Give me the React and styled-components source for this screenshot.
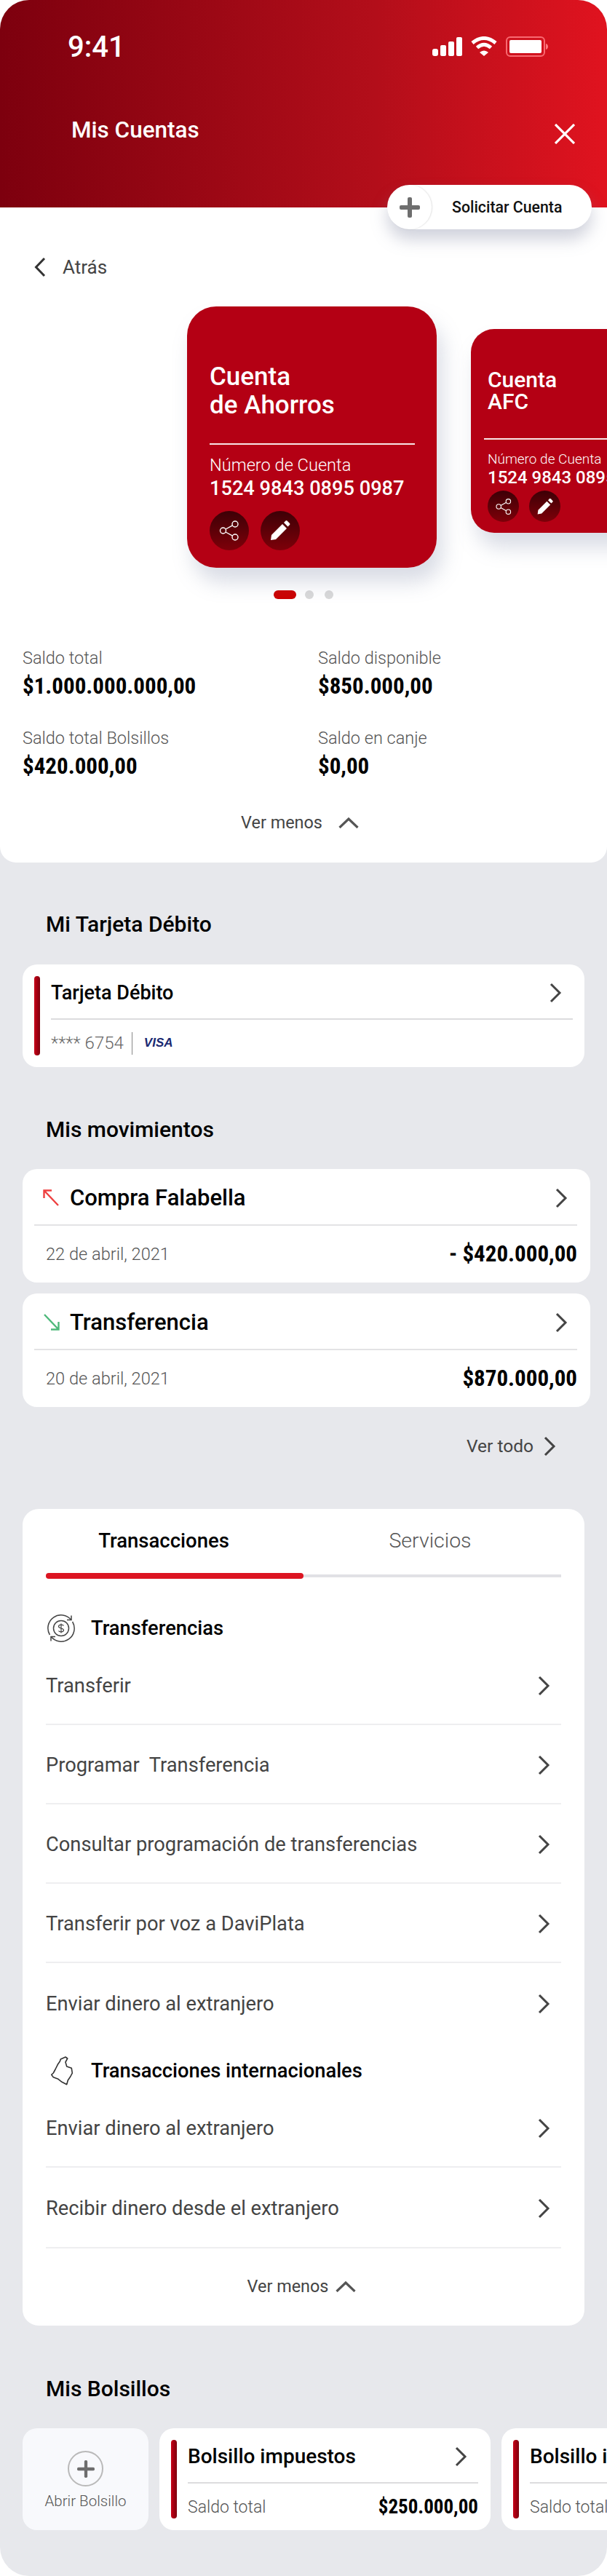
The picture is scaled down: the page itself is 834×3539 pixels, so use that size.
import React from "react";
import styled, { createGlobalStyle } from "styled-components";

const GlobalStyle = createGlobalStyle`
  html, body { margin: 0; padding: 0; background: #fff; }
  * { box-sizing: border-box; }
  body { font-family: Roboto, "Noto Sans", sans-serif; }
`;

const Page = styled.div`
  width: 834px;
  height: 3539px;
  background: #e7e8ec;
  border-radius: 40px;
  overflow: hidden;
  position: relative;
`;

const Header = styled.header`
  height: 285px;
  background: linear-gradient(90deg, #7d000e 0%, #b30e1a 62%, #e0131f 100%);
  padding: 48px 44px 0 93px;
`;

const StatusBar = styled.div`
  display: flex;
  justify-content: space-between;
  align-items: center;
  height: 32px;
  padding-right: 36px;
  color: #fff;
  font-size: 40px;
  font-weight: 500;
`;

const TitleBar = styled.div`
  display: flex;
  justify-content: space-between;
  align-items: center;
  margin: 79px 0 0 5px;
  color: #fff;
  font-size: 31.5px;
  font-weight: 500;
  line-height: 40px;
`;

const CloseIcon = styled.svg`
  margin-top: 10px;
`;

const RequestButton = styled.div`
  position: absolute;
  left: 532px;
  top: 254px;
  width: 281px;
  height: 61px;
  display: flex;
  align-items: center;
  background: #fff;
  border-radius: 31px;
  box-shadow: 0 14px 22px rgba(120, 125, 155, 0.35);
  font-size: 21.3px;
  font-weight: 500;
  color: #111;
`;

const RequestIcon = styled.span`
  width: 61px;
  height: 61px;
  border-radius: 50%;
  box-shadow: 1px 0 2px rgba(0, 0, 0, 0.12);
  display: flex;
  align-items: center;
  justify-content: center;
  margin-right: 28px;
`;

const TopPanel = styled.section`
  height: 900px;
  background: #fff;
  border-radius: 0 0 22px 22px;
  padding-top: 64px;
  overflow: hidden;
`;

const BackRow = styled.div`
  display: flex;
  align-items: center;
  gap: 23px;
  padding-left: 47px;
  height: 36px;
  font-size: 26px;
  color: #444;
`;

const Carousel = styled.div`
  display: flex;
  align-items: flex-start;
  height: 360px;
  margin-top: 36px;
  padding-left: 257px;
  gap: 47px;
`;

const AccountCard = styled.article`
  flex: none;
  position: relative;
  background: #b40014;
  color: #fff;
  width: ${(p) => (p.$small ? "300px" : "343px")};
  height: ${(p) => (p.$small ? "280px" : "359px")};
  margin-top: ${(p) => (p.$small ? "31px" : "0")};
  border-radius: ${(p) => (p.$small ? "32px 0 0 32px" : "40px")};
  padding: ${(p) => (p.$small ? "55px 0 0 23px" : "77px 30px 0 31px")};
  box-shadow: 8px 20px 28px rgba(120, 130, 160, 0.28);
`;

const AccountName = styled.h3`
  margin: 0;
  font-weight: 500;
  font-size: ${(p) => (p.$small ? "30px" : "35px")};
  line-height: ${(p) => (p.$small ? "30px" : "39px")};
  height: ${(p) => (p.$small ? "95px" : "111px")};
`;

const CardRule = styled.div`
  height: 2px;
  background: rgba(255, 255, 255, 0.9);
  margin-left: ${(p) => (p.$small ? "-5px" : "0")};
`;

const NumberLabel = styled.div`
  margin-top: ${(p) => (p.$small ? "16px" : "14px")};
  font-weight: 300;
  font-size: ${(p) => (p.$small ? "19px" : "23.6px")};
  line-height: ${(p) => (p.$small ? "22px" : "28px")};
  white-space: nowrap;
`;

const NumberValue = styled.div`
  margin-top: ${(p) => (p.$small ? "0" : "2px")};
  font-weight: 500;
  font-size: ${(p) => (p.$small ? "24px" : "27.2px")};
  line-height: ${(p) => (p.$small ? "28px" : "32px")};
  white-space: nowrap;
`;

const CardActions = styled.div`
  display: flex;
  gap: ${(p) => (p.$small ? "14px" : "16px")};
  margin-top: ${(p) => (p.$small ? "4px" : "15px")};
`;

const RoundAction = styled.span`
  width: ${(p) => (p.$small ? "43px" : "54px")};
  height: ${(p) => (p.$small ? "43px" : "54px")};
  border-radius: 50%;
  background: linear-gradient(180deg, #3d0006 0%, #7e0009 100%);
  display: flex;
  align-items: center;
  justify-content: center;
`;

const Dots = styled.div`
  display: flex;
  gap: 12px;
  padding-left: 376px;
  margin-top: 30px;
  height: 12px;
`;

const Dot = styled.span`
  height: 12px;
  width: ${(p) => (p.$active ? "31px" : "12px")};
  margin-right: ${(p) => (p.$active ? "0" : "3px")};
  border-radius: 6px;
  background: ${(p) => (p.$active ? "#cc0000" : "#d9d9d9")};
`;

const Balances = styled.div`
  display: grid;
  grid-template-columns: 406px 1fr;
  row-gap: 39px;
  padding-left: 31px;
  margin-top: 67px;
`;

const BalanceLabel = styled.div`
  font-size: 23.5px;
  line-height: 28px;
  font-weight: 300;
  color: #555;
  margin-bottom: 7px;
`;

const Money = styled.div`
  font-family: "Roboto Condensed", "Liberation Sans Narrow", Roboto, sans-serif;
  font-stretch: condensed;
  font-weight: 700;
  font-size: ${(p) => p.$size || "31px"};
  line-height: ${(p) => p.$line || "36px"};
  color: #000;
  white-space: nowrap;
`;

const SeeLessWrap = styled.div`
  margin-top: ${(p) => p.$top || "45px"};
`;

const SeeLess = styled.div`
  display: flex;
  align-items: center;
  justify-content: center;
  gap: ${(p) => p.$gap || "22px"};
  padding-right: ${(p) => p.$shift || "10px"};
  font-size: 23.4px;
  line-height: 28px;
  color: #444;
`;

const SectionGap = styled.div`
  height: ${(p) => p.$h};
`;

const Section = styled.section`
  padding: 0 31px;
`;

const SectionTitle = styled.h2`
  margin: 0;
  padding-left: 63px;
  font-size: 30px;
  line-height: 36px;
  font-weight: 500;
  color: #000;
`;

const DebitCard = styled.div`
  width: 772px;
  height: 141px;
  background: #fff;
  border-radius: 20px;
  padding: 16px;
  display: flex;
  gap: 15px;
`;

const Accent = styled.span`
  flex: none;
  width: 8px;
  border-radius: 4px;
  background: linear-gradient(90deg, #c70016, #7d000e);
`;

const CardBody = styled.div`
  flex: 1;
  min-width: 0;
`;

const CardHead = styled.div`
  display: flex;
  justify-content: space-between;
  align-items: center;
  height: 60px;
  padding: 0 ${(p) => p.$pad || "15px"} 13px 0;
  border-bottom: 2px solid #dcdcde;
  font-size: ${(p) => p.$size || "27px"};
  font-weight: 500;
  color: #000;
`;

const CardFoot = styled.div`
  display: flex;
  justify-content: space-between;
  align-items: center;
  height: ${(p) => p.$height || "50px"};
  padding-top: ${(p) => p.$top || "0"};
`;

const MaskedNumber = styled.div`
  display: flex;
  align-items: center;
  font-size: 24px;
  color: #666;
  font-weight: 300;
`;

const Divider = styled.span`
  display: block;
  width: 1px;
  height: 31px;
  background: #888;
  margin: 0 16px 0 11px;
`;

const VisaMark = styled.span`
  font-family: "Liberation Sans", sans-serif;
  font-style: italic;
  font-weight: 700;
  font-size: 17px;
  color: #1a2a72;
`;

const MoveList = styled.div`
  display: flex;
  flex-direction: column;
  gap: 15px;
`;

const MoveCard = styled.div`
  width: 780px;
  height: 156px;
  background: #fff;
  border-radius: 20px;
  padding: 0 18px 0 16px;
`;

const MoveHead = styled.div`
  display: flex;
  align-items: center;
  height: 78px;
  padding: 3px 13px 0 12px;
  border-bottom: 2px solid #e3e3e5;
  font-size: 31px;
  font-weight: 500;
  color: #000;
  gap: 14px;
`;

const MoveTitle = styled.span`
  flex: 1;
`;

const MoveFoot = styled.div`
  display: flex;
  justify-content: space-between;
  align-items: center;
  height: 78px;
  padding-left: 16px;
  font-size: 23.6px;
  font-weight: 300;
  color: #555;
`;

const SeeAll = styled.div`
  display: flex;
  justify-content: flex-end;
  align-items: center;
  gap: 14px;
  padding-right: 70px;
  font-size: 24.5px;
  line-height: 28px;
  color: #444;
`;

const ActionsPanel = styled.div`
  width: 772px;
  height: 1122px;
  background: #fff;
  border-radius: 22px;
  padding: 26px 32px 0;
`;

const Tabs = styled.div`
  display: grid;
  grid-template-columns: 1fr 1fr;
  height: 68px;
  border-bottom: 4px solid #e1e1e5;
  position: relative;
`;

const Tab = styled.div`
  text-align: center;
  padding-top: 1px;
  padding-right: ${(p) => (p.$active ? "30px" : "6px")};
  font-size: ${(p) => (p.$active ? "27.5px" : "28.5px")};
  line-height: 34px;
  font-weight: ${(p) => (p.$active ? 500 : 300)};
  color: ${(p) => (p.$active ? "#000" : "#555")};
`;

const TabBar = styled.span`
  position: absolute;
  left: 0;
  bottom: -6px;
  width: 354px;
  height: 8px;
  border-radius: 4px;
  background: #dc1522;
`;

const GroupTitle = styled.div`
  display: flex;
  align-items: center;
  height: 40px;
  margin: ${(p) => p.$top} 0 4px;
  font-size: 27.3px;
  font-weight: 500;
  color: #000;
`;

const GroupIcon = styled.span`
  width: 62px;
  flex: none;
  display: flex;
  padding-left: ${(p) => p.$pad || "2px"};
`;

const MenuRow = styled.div`
  display: flex;
  justify-content: space-between;
  align-items: center;
  height: ${(p) => p.$height || "109px"};
  padding: 2px 15px 0 0;
  border-bottom: ${(p) => (p.$plain ? "none" : "2px solid #eeeef0")};
  font-size: 27.3px;
  font-weight: 400;
  color: #444;
  white-space: pre;
`;

const PocketRow = styled.div`
  display: flex;
  gap: 15px;
  padding-left: 31px;
  margin-top: 36px;
  overflow: hidden;
`;

const AddPocket = styled.div`
  flex: none;
  width: 173px;
  height: 140px;
  background: #f8f9fc;
  border-radius: 20px;
  display: flex;
  flex-direction: column;
  align-items: center;
  padding-top: 31px;
  font-size: 20.5px;
  font-weight: 300;
  color: #555;
`;

const AddCircle = styled.span`
  width: 49px;
  height: 49px;
  border: 2px solid #b9b9b9;
  border-radius: 50%;
  display: flex;
  align-items: center;
  justify-content: center;
  margin-bottom: 8px;
`;

const PocketCard = styled.div`
  flex: none;
  width: 455px;
  height: 140px;
  background: #fff;
  border-radius: 20px;
  padding: 16px 17px 16px 16px;
  display: flex;
  gap: 15px;
`;

const SaldoLabel = styled.span`
  font-size: 23px;
  font-weight: 300;
  color: #555;
`;

const Chevron = ({ color = "#444", w = 17, h = 28 }) => (
  <svg width={w} height={h} viewBox="0 0 17 28" fill="none">
    <path d="M2 2l12 12L2 26" stroke={color} strokeWidth="3" />
  </svg>
);

const ChevronLeft = () => (
  <svg width="16" height="28" viewBox="0 0 16 28" fill="none">
    <path d="M14 2L2.5 14 14 26" stroke="#333" strokeWidth="3" />
  </svg>
);

const ChevronUp = ({ width = 28 }) => (
  <svg width={width} height="15" viewBox="0 0 28 15" fill="none">
    <path d="M1.5 14L14 2l12.5 12" stroke="#555" strokeWidth="3.2" />
  </svg>
);

const ShareIcon = ({ size = 30 }) => (
  <svg width={size} height={size} viewBox="0 0 30 30" fill="none" stroke="#fff" strokeWidth="1.4">
    <circle cx="6.5" cy="15" r="4" />
    <circle cx="23" cy="6" r="4" />
    <circle cx="23" cy="24" r="4" />
    <path d="M10 13l9.5-5.2M10 17l9.5 5.2" />
  </svg>
);

const PencilIcon = ({ size = 30 }) => (
  <svg width={size} height={size} viewBox="0 0 30 30" fill="#fff">
    <path d="M2 28l1-7L18 6l6 6L9 27z" />
    <path d="M20 4l2.5-2.5a1.5 1.5 0 0 1 2 0l3.5 3.5a1.5 1.5 0 0 1 0 2L25.5 9.5z" />
  </svg>
);

const PlusIcon = ({ size = 28, bar = 6, color = "#6e6e6e" }) => (
  <svg width={size} height={size} viewBox="0 0 28 28" fill={color}>
    <rect x={14 - bar / 2} y="0" width={bar} height="28" rx="2" />
    <rect x="0" y={14 - bar / 2} width="28" height={bar} rx="2" />
  </svg>
);

const accounts = [
  { name: ["Cuenta", "de Ahorros"] },
  { name: ["Cuenta", "AFC"], small: true },
];

const menuOne = [
  "Transferir",
  "Programar  Transferencia",
  "Consultar programación de transferencias",
  "Transferir por voz a DaviPlata",
];

const Account = ({ name, small }) => (
  <AccountCard $small={small}>
    <AccountName $small={small}>
      {name[0]}
      <br />
      {name[1]}
    </AccountName>
    <CardRule $small={small} />
    <NumberLabel $small={small}>Número de Cuenta</NumberLabel>
    <NumberValue $small={small}>1524 9843 0895 0987</NumberValue>
    <CardActions $small={small}>
      <RoundAction $small={small}>
        <ShareIcon size={small ? 24 : 30} />
      </RoundAction>
      <RoundAction $small={small}>
        <PencilIcon size={small ? 24 : 30} />
      </RoundAction>
    </CardActions>
  </AccountCard>
);

const Movement = ({ up, title, date, amount }) => (
  <MoveCard>
    <MoveHead>
      <svg width="23" height="23" viewBox="0 0 23 23" fill="none" stroke={up ? "#ee4040" : "#4db87a"} strokeWidth="2.4">
        {up ? <path d="M1.5 12V1.5H12M1.5 1.5L21 22" /> : <path d="M21.5 11v10.5H11M21.5 21.5L2 1" />}
      </svg>
      <MoveTitle>{title}</MoveTitle>
      <Chevron />
    </MoveHead>
    <MoveFoot>
      {date}
      <Money>{amount}</Money>
    </MoveFoot>
  </MoveCard>
);

const Pocket = () => (
  <PocketCard>
    <Accent />
    <CardBody>
      <CardHead $size="28px">
        Bolsillo impuestos
        <Chevron />
      </CardHead>
      <CardFoot $height="64px">
        <SaldoLabel>Saldo total</SaldoLabel>
        <Money $size="27px">$250.000,00</Money>
      </CardFoot>
    </CardBody>
  </PocketCard>
);

const App = () => {
  return (
    <Page>
      <GlobalStyle />
      <Header>
        <StatusBar>
          9:41
          <svg width="160" height="28" viewBox="0 -1 160 28" fill="#fff">
            <rect x="0" y="16" width="8" height="10" rx="3" />
            <rect x="11" y="11" width="8" height="15" rx="2" />
            <rect x="22" y="6" width="8" height="20" rx="2" />
            <rect x="33" y="0" width="8" height="26" rx="2" />
            <path d="M55 8Q71 -5 87 8" fill="none" stroke="#fff" strokeWidth="5" />
            <path d="M61.5 14.5Q71 6 80.5 14.5" fill="none" stroke="#fff" strokeWidth="5" />
            <path d="M65 21Q71 16 77 21L71 26z" />
            <rect x="102" y="0" width="52" height="26" rx="5" fill="none" stroke="#ff7a80" strokeWidth="2" opacity="0.85" />
            <rect x="106" y="4" width="44" height="18" rx="2" />
            <path d="M156 9c4 1 4 7 0 8z" fill="#ff7a80" />
          </svg>
        </StatusBar>
        <TitleBar>
          Mis Cuentas
          <CloseIcon width="28" height="28" viewBox="0 0 28 28" stroke="#fff" strokeWidth="3.2">
            <path d="M1 1l26 26M27 1L1 27" />
          </CloseIcon>
        </TitleBar>
      </Header>
      <RequestButton>
        <RequestIcon>
          <PlusIcon />
        </RequestIcon>
        Solicitar Cuenta
      </RequestButton>
      <TopPanel>
        <BackRow>
          <ChevronLeft />
          Atrás
        </BackRow>
        <Carousel>
          {accounts.map((a) => (
            <Account key={a.name[1]} {...a} />
          ))}
        </Carousel>
        <Dots>
          <Dot $active />
          <Dot />
          <Dot />
        </Dots>
        <Balances>
          <div>
            <BalanceLabel>Saldo total</BalanceLabel>
            <Money>$1.000.000.000,00</Money>
          </div>
          <div>
            <BalanceLabel>Saldo disponible</BalanceLabel>
            <Money>$850.000,00</Money>
          </div>
          <div>
            <BalanceLabel>Saldo total Bolsillos</BalanceLabel>
            <Money>$420.000,00</Money>
          </div>
          <div>
            <BalanceLabel>Saldo en canje</BalanceLabel>
            <Money>$0,00</Money>
          </div>
        </Balances>
        <SeeLessWrap>
          <SeeLess>
            Ver menos
            <ChevronUp />
          </SeeLess>
        </SeeLessWrap>
      </TopPanel>
      <SectionGap $h="67px" />
      <SectionTitle>Mi Tarjeta Débito</SectionTitle>
      <SectionGap $h="37px" />
      <Section>
        <DebitCard>
          <Accent />
          <CardBody>
            <CardHead>
              Tarjeta Débito
              <Chevron />
            </CardHead>
            <CardFoot $top="14px">
              <MaskedNumber>
                **** 6754
                <Divider />
                <VisaMark>VISA</VisaMark>
              </MaskedNumber>
            </CardFoot>
          </CardBody>
        </DebitCard>
      </Section>
      <SectionGap $h="68px" />
      <SectionTitle>Mis movimientos</SectionTitle>
      <SectionGap $h="36px" />
      <Section>
        <MoveList>
          <Movement up title="Compra Falabella" date="22 de abril, 2021" amount="- $420.000,00" />
          <Movement title="Transferencia" date="20 de abril, 2021" amount="$870.000,00" />
        </MoveList>
      </Section>
      <SectionGap $h="40px" />
      <SeeAll>
        Ver todo
        <Chevron />
      </SeeAll>
      <SectionGap $h="72px" />
      <Section>
        <ActionsPanel>
          <Tabs>
            <Tab $active>Transacciones</Tab>
            <Tab>Servicios</Tab>
            <TabBar />
          </Tabs>
          <GroupTitle $top="50px">
            <GroupIcon>
              <svg width="38" height="38" viewBox="0 0 38 38" fill="none" stroke="#444" strokeWidth="1.5">
                <circle cx="19" cy="19" r="10.5" />
                <path d="M32.8 7.4A18 18 0 0 0 3.4 28" />
                <path d="M5.2 30.6A18 18 0 0 0 34.6 10" />
                <path d="M33 1.5V7.5H27M5 36.5V30.5H11" />
                <path d="M22.5 15.5c-1-2-7-2-7 1s7 2 7 5-6 3-7 1M19 12.5v13" strokeWidth="1.2" />
              </svg>
            </GroupIcon>
            Transferencias
          </GroupTitle>
          {menuOne.map((label) => (
            <MenuRow key={label}>
              {label}
              <Chevron />
            </MenuRow>
          ))}
          <MenuRow $plain>
            Enviar dinero al extranjero
            <Chevron />
          </MenuRow>
          <GroupTitle $top="19px">
            <GroupIcon $pad="7px">
              <svg width="30" height="40" viewBox="0 0 30 40" fill="none" stroke="#333" strokeWidth="1.6" strokeLinejoin="round">
                <path d="M20 1l-6.7 3-1 3-3 4.3L6 18l-2.7 5-2.6 2.3 2.6 3.4 6.7 2.6 5 4 6.7 3.4 1.6-5.7 3.4-5 2.6-5-1-6.7-6.6-2.3-1.7-6 2.7-5z" />
              </svg>
            </GroupIcon>
            Transacciones internacionales
          </GroupTitle>
          <MenuRow>
            Enviar dinero al extranjero
            <Chevron />
          </MenuRow>
          <MenuRow $height="111px">
            Recibir dinero desde el extranjero
            <Chevron />
          </MenuRow>
          <SeeLessWrap $top="38px">
            <SeeLess $gap="10px" $shift="5px">
              Ver menos
              <ChevronUp />
            </SeeLess>
          </SeeLessWrap>
        </ActionsPanel>
      </Section>
      <SectionGap $h="69px" />
      <SectionTitle>Mis Bolsillos</SectionTitle>
      <PocketRow>
        <AddPocket>
          <AddCircle>
            <PlusIcon size={24} bar={5} />
          </AddCircle>
          Abrir Bolsillo
        </AddPocket>
        <Pocket />
        <Pocket />
      </PocketRow>
    </Page>
  );
};

export default App;
